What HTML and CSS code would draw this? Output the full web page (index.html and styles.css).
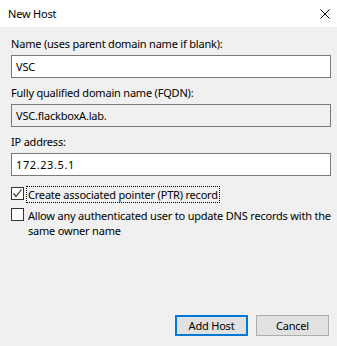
FILE: index.html
```html
<!DOCTYPE html>
<html lang="en">
  <head>
    <meta charset="utf-8">
    <title>New Host</title>
    <link rel="stylesheet" href="styles.css">
  </head>
  <body>

  <div class="dialog">
    <div class="titlebar">
      <span class="title">New Host</span>
      <svg class="close" width="10" height="10" viewBox="0 0 10 10">
        <path d="M0.5 0.5 L9.5 9.5 M9.5 0.5 L0.5 9.5" stroke="#000" stroke-width="1" fill="none"/>
      </svg>
    </div>

    <div class="content">
      <div class="field">
        <label class="label">Name (uses parent domain name if blank):</label>
        <div class="input">VSC</div>
      </div>

      <div class="field">
        <label class="label">Fully qualified domain name (FQDN):</label>
        <div class="input readonly">VSC.flackboxA.lab.</div>
      </div>

      <div class="field">
        <label class="label">IP address:</label>
        <div class="input ip">172.23.5.1</div>
      </div>

      <div class="checks">
        <div class="check">
          <span class="box">
            <svg width="11" height="11" viewBox="0 0 11 11">
              <path d="M1.5 5.5 L4 8.5 L9.5 1.5" stroke="#333" stroke-width="1.2" fill="none"/>
            </svg>
          </span>
          <span class="text focused">Create associated pointer (PTR) record</span>
        </div>

        <div class="check">
          <span class="box"></span>
          <span class="text">Allow any authenticated user to update DNS records with the same owner name</span>
        </div>
      </div>

      <div class="buttons">
        <button class="btn default">Add Host</button>
        <button class="btn">Cancel</button>
      </div>
    </div>
  </div>

  </body>
</html>
```

FILE: styles.css
```css
html, body {
  margin: 0;
  padding: 0;
  height: 100%;
}

body {
  background: #f0f0f0;
  color: #000;
  font-family: "Noto Sans", sans-serif;
  font-size: 11px;
  letter-spacing: -0.2px;
  line-height: 16px;
}

.dialog {
  display: flex;
  flex-direction: column;
  height: 346px;
  width: 337px;
}

.titlebar {
  height: 27px;
  background: #fff;
  display: flex;
  align-items: center;
  justify-content: space-between;
  padding: 0 7px 0 8px;
  flex-shrink: 0;
}

.close {
  display: block;
}

.content {
  flex: 1;
  display: flex;
  flex-direction: column;
  padding: 9px 6px 10px 11px;
}

.field {
  display: flex;
  flex-direction: column;
  gap: 3px;
  margin-bottom: 7px;
}

.input {
  height: 21px;
  border: 1px solid #7a7a7a;
  background: #fff;
  padding: 0 4px;
  display: flex;
  align-items: center;
}

.input.readonly {
  background: #f0f0f0;
}

.input.ip {
  letter-spacing: 0.6px;
}

.checks {
  display: flex;
  flex-direction: column;
  gap: 4px;
  margin-top: 3px;
}

.check {
  display: flex;
  align-items: flex-start;
  gap: 2px;
}

.box {
  width: 11px;
  height: 11px;
  border: 1px solid #333;
  background: #fff;
  margin-top: 1px;
  flex-shrink: 0;
}

.box svg {
  display: block;
}

.text {
  border: 1px dotted transparent;
  padding: 0 1px;
  width: 306px;
  flex-shrink: 0;
  line-height: 15px;
}

.text.focused {
  border-color: #000;
  width: auto;
}

.buttons {
  margin-top: auto;
  display: flex;
  justify-content: flex-end;
  gap: 8px;
  padding-right: 2px;
}

.btn {
  width: 73px;
  height: 21px;
  font-family: inherit;
  font-size: 11px;
  letter-spacing: -0.2px;
  background: #e1e1e1;
  border: 1px solid #adadad;
  padding: 0;
  color: #000;
}

.btn.default {
  border: 2px solid #0078d7;
}
```
